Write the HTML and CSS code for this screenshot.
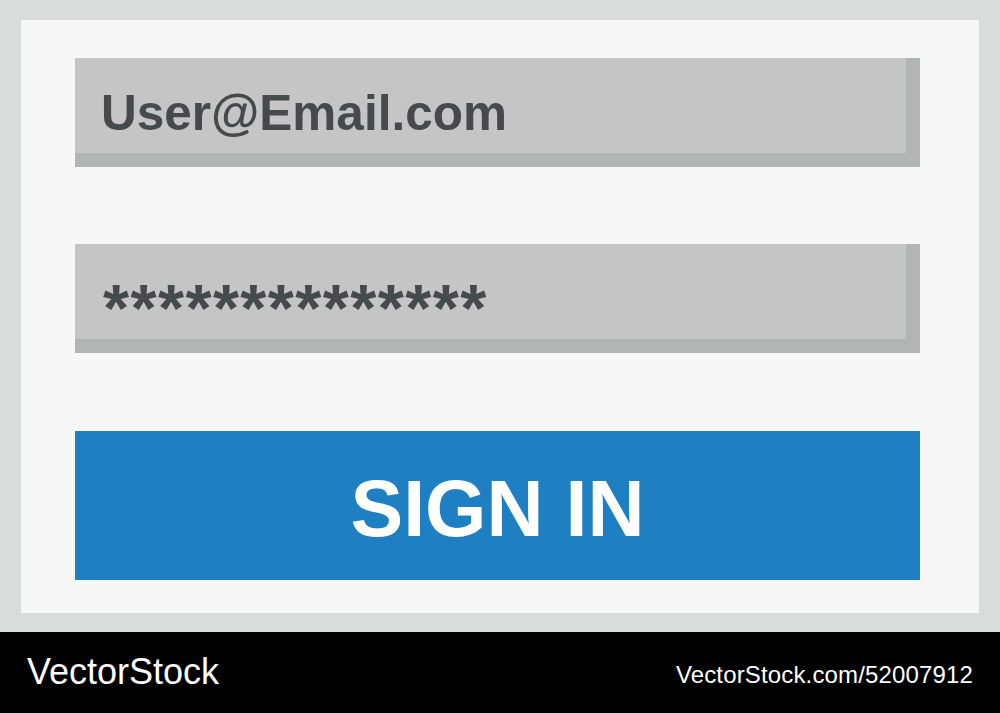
FILE: index.html
```html
<!DOCTYPE html>
<html>
<head>
<meta charset="utf-8">
<link rel="stylesheet" href="styles.css">
</head>
<body>
<div class="stage">
  <div class="panel">
    <div class="field"><span class="email">User@Email.com</span></div>
    <div class="field"><span class="password">**************</span></div>
    <div class="button">SIGN IN</div>
  </div>
</div>
<div class="footer">
  <span class="brand">VectorStock</span>
  <span class="ref">VectorStock.com/52007912</span>
</div>
</body>
</html>
```
FILE: styles.css
```css
html, body {
  margin: 0;
  padding: 0;
  width: 1000px;
  height: 713px;
  overflow: hidden;
  font-family: "Liberation Sans", Arial, sans-serif;
}
.stage {
  box-sizing: border-box;
  height: 632px;
  background: #dadbdb;
  padding: 20px 21px 19px 21px;
}
.panel {
  box-sizing: border-box;
  height: 593px;
  background: #f7f7f7;
  padding: 38px 59px 0 54px;
  display: flex;
  flex-direction: column;
}
.field {
  box-sizing: border-box;
  height: 109px;
  background: #c4c5c4;
  border-right: 14px solid #b3b5b5;
  border-bottom: 14px solid #b3b5b5;
  color: #474a4b;
  font-weight: bold;
}
.field + .field {
  margin-top: 77px;
}
.email {
  display: block;
  font-size: 49.5px;
  line-height: 50px;
  padding: 30px 0 0 26px;
}
.password {
  display: block;
  font-size: 67px;
  line-height: 68px;
  letter-spacing: 1.4px;
  padding: 30px 0 0 28px;
}
.button {
  margin-top: 78px;
  height: 149px;
  box-sizing: border-box;
  background: #1f7fc3;
  color: #ffffff;
  font-weight: bold;
  font-size: 79px;
  line-height: 79px;
  display: flex;
  align-items: center;
  justify-content: center;
  padding-top: 6px;
}
.footer {
  box-sizing: border-box;
  height: 81px;
  background: #000;
  color: #fff;
  display: flex;
  justify-content: space-between;
  align-items: flex-start;
  padding: 0 27px 0 27px;
}
.brand {
  font-size: 36px;
  line-height: 36px;
  margin-top: 22px;
}
.ref {
  font-size: 24px;
  line-height: 24px;
  letter-spacing: 0.15px;
  margin-top: 31px;
}
```
